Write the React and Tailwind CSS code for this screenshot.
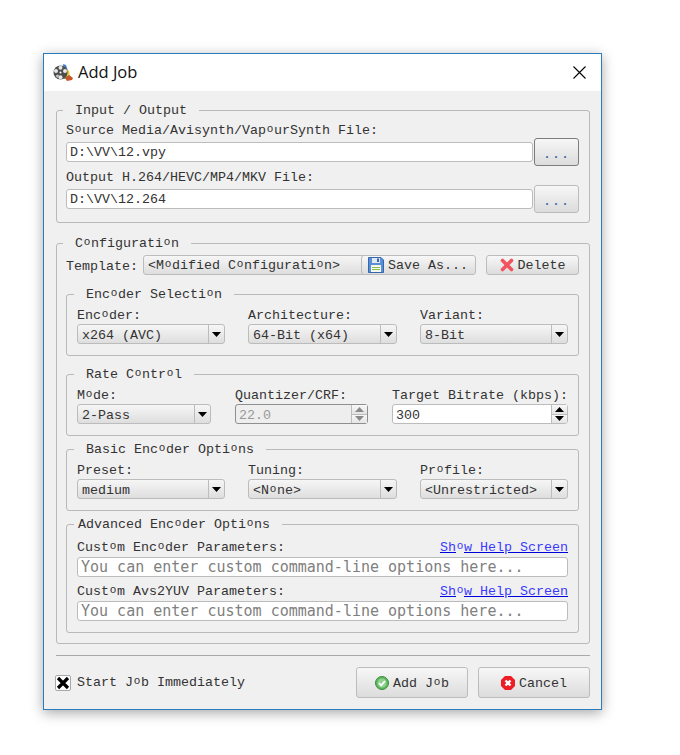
const mono = "font-['Liberation_Mono',monospace] text-[13.33px] text-[#333]";

function T({ children }) {
  const parts = String(children).split("o");
  return (
    <>
      {parts.map((p, i) => (
        <span key={i}>
          {p}
          {i < parts.length - 1 && (
            <span className="inline-block w-[8px] text-center text-[11px] leading-[10px] relative top-[-2px]">o</span>
          )}
        </span>
      ))}
    </>
  );
}

function Group({ title, legendClass, className = "", children }) {
  return (
    <fieldset className={`border border-[#b9b9b9] rounded-[3px] ${className}`}>
      <legend className={`h-[16px] ${legendClass}`}>
        <span className={`block h-[16px] whitespace-pre leading-[18px] ${mono}`}><T>{title}</T></span>
      </legend>
      {children}
    </fieldset>
  );
}

function Label({ children, className = "" }) {
  return <div className={`h-[16px] whitespace-pre leading-[18px] ${mono} ${className}`}><T>{children}</T></div>;
}

function Arrow({ up = false, color = "#000" }) {
  return (
    <svg width="9" height="5" viewBox="0 0 9 5">
      <path d={up ? "M0 5 L4.5 0 L9 5 Z" : "M0 0 L9 0 L4.5 5 Z"} fill={color} />
    </svg>
  );
}

function Combo({ children }) {
  return (
    <div className="h-[20px] flex border border-[#bcbcbc] rounded-[3px] bg-linear-to-b from-[#f6f6f6] to-[#dedede]">
      <div className={`flex-1 h-[18px] pl-[4px] whitespace-pre leading-[22px] ${mono}`}><T>{children}</T></div>
      <div className="w-[16px] border-l border-[#bcbcbc] flex items-center justify-center"><Arrow /></div>
    </div>
  );
}

function Spin({ value, disabled = false }) {
  const c = disabled ? "#8a8a8a" : "#000";
  return (
    <div className={`h-[20px] flex rounded-[3px] border ${disabled ? "border-[#8f8f8f] bg-[#eeeeee]" : "border-[#bcbcbc] bg-white"}`}>
      <div className={`flex-1 h-[18px] pl-[3px] leading-[22px] font-['Liberation_Mono',monospace] text-[13.33px] ${disabled ? "text-[#9a9a9a]" : "text-[#333]"}`}>{value}</div>
      <div className="w-[16px] flex flex-col border-l border-[#bcbcbc]">
        <div className="flex-1 flex items-center justify-center bg-linear-to-b from-[#f8f8f8] to-[#e4e4e4] border-b border-[#bcbcbc]"><Arrow up color={c} /></div>
        <div className="flex-1 flex items-center justify-center bg-linear-to-b from-[#f8f8f8] to-[#e4e4e4]"><Arrow color={c} /></div>
      </div>
    </div>
  );
}

function Field({ value, placeholder, className = "" }) {
  return (
    <input
      readOnly
      value={value}
      placeholder={placeholder}
      className={`h-[20px] block border border-[#bcbcbc] rounded-[3px] bg-white px-[3px] outline-none text-[#333] placeholder:text-[#808080] ${
        placeholder ? "font-['DejaVu_Sans_Mono',monospace] text-[15px]" : "font-['Liberation_Mono',monospace] text-[13.33px]"
      } ${className}`}
    />
  );
}

function Btn({ className = "", children }) {
  return (
    <button className={`flex items-center justify-center border rounded-[3px] bg-linear-to-b from-[#f7f7f7] to-[#dcdcdc] leading-[16px] ${mono} ${className}`}>
      {children}
    </button>
  );
}

function FilmIcon() {
  return (
    <svg width="21" height="20" viewBox="0 0 21 20" className="shrink-0">
      <path d="M11 3 L15 8 L17 15 L11 16 Z" fill="#6aa84f" />
      <path d="M10 1 L13 2 L15 8 L11 9 Z" fill="#3f7fd0" />
      <path d="M14 6 L16 8 L17 14 L14 14 Z" fill="#e6c42a" />
      <circle cx="7.5" cy="9.5" r="7" fill="#4d4d4d" />
      <circle cx="7.5" cy="4.8" r="2" fill="#e8e8e8" />
      <circle cx="7.5" cy="14.2" r="2" fill="#e8e8e8" />
      <circle cx="3" cy="8" r="2" fill="#e8e8e8" />
      <circle cx="12" cy="8" r="2" fill="#e8e8e8" />
      <circle cx="4.5" cy="13" r="1.6" fill="#bdbdbd" />
      <circle cx="7.5" cy="9.5" r="1" fill="#fff" />
      <path d="M12 15 L16 12 L20 15 L19 17 L14 18 Z" fill="#c9562b" />
    </svg>
  );
}

function SaveIcon() {
  return (
    <svg width="16" height="16" viewBox="0 0 16 16" className="shrink-0">
      <path d="M0.5 0.5 H13 L15.5 3 V15.5 H0.5 Z" fill="#5a8fd8" stroke="#3567ad" />
      <rect x="4" y="1" width="8" height="5" fill="#dfe9f6" />
      <rect x="9" y="1.5" width="2" height="3.5" fill="#3567ad" />
      <rect x="3" y="8" width="10" height="7" fill="#f3f7ee" />
      <rect x="4" y="10" width="8" height="1" fill="#8bc34a" />
      <rect x="4" y="12" width="8" height="1" fill="#8bc34a" />
    </svg>
  );
}

function DeleteIcon() {
  return (
    <svg width="14" height="14" viewBox="0 0 14 14" className="shrink-0">
      <path d="M2.5 2.5 L11.5 11.5 M11.5 2.5 L2.5 11.5" stroke="#f0555f" strokeWidth="3.6" strokeLinecap="round" />
    </svg>
  );
}

function OkIcon() {
  return (
    <svg width="14" height="14" viewBox="0 0 14 14" className="shrink-0">
      <circle cx="7" cy="7" r="6.5" fill="#5cb85c" stroke="#3d8b3d" />
      <circle cx="7" cy="7" r="4.5" fill="#8fd18f" />
      <path d="M4 7.2 L6.2 9.4 L10 5" fill="none" stroke="#fff" strokeWidth="1.8" />
    </svg>
  );
}

function CancelIcon() {
  return (
    <svg width="14" height="14" viewBox="0 0 14 14" className="shrink-0">
      <path d="M4 0 H10 L14 4 V10 L10 14 H4 L0 10 V4 Z" fill="#ee1c25" />
      <path d="M4.5 4.5 L9.5 9.5 M9.5 4.5 L4.5 9.5" stroke="#fff" strokeWidth="2.4" />
    </svg>
  );
}

function Link() {
  return (
    <a className="whitespace-pre leading-[18px] h-[16px] font-['Liberation_Mono',monospace] text-[13.33px] text-[#3b3bff] underline decoration-[#0000dd]">
      <T>Show Help Screen</T>
    </a>
  );
}

export default function App() {
  return (
    <div className="w-[680px] h-[755px] bg-white pt-[53px] pl-[43px]">
      <div className="w-[559px] h-[657px] border border-[#2b7cbd] bg-[#f0f0f0] shadow-[0_3px_12px_rgba(0,0,0,0.35)]">
        {/* Title bar */}
        <div className="h-[37px] bg-white flex items-center pl-[9px] pr-[15px]">
          <FilmIcon />
          <span className="ml-[4px] font-['Open_Sans',sans-serif] text-[16.5px] text-[#111]">Add Job</span>
          <svg width="13" height="13" viewBox="0 0 13 13" className="ml-auto">
            <path d="M0.5 0.5 L12.5 12.5 M12.5 0.5 L0.5 12.5" stroke="#000" strokeWidth="1.1" />
          </svg>
        </div>

        <div className="pl-[12px] pr-[11px] pt-[11px]">
          {/* Input / Output */}
          <Group title="Input / Output" legendClass="ml-[-3px] px-[12px]" className="pl-[9px] pr-[10px] pt-[4px] pb-[9px]">
            <Label>Source Media/Avisynth/VapourSynth File:</Label>
            <div className="h-[28px] flex items-center gap-[1px]">
              <Field value="D:\VV\12.vpy" className="w-[467px]" />
              <Btn className="w-[45px] h-[28px] border-[#7c7c7c] !text-[#2a5f9e] tracking-[1px]"><span className="pt-[6px]">...</span></Btn>
            </div>
            <Label className="mt-[3px]">Output H.264/HEVC/MP4/MKV File:</Label>
            <div className="h-[28px] flex items-center gap-[1px]">
              <Field value="D:\VV\12.264" className="w-[467px]" />
              <Btn className="w-[45px] h-[28px] border-[#bcbcbc] !text-[#2a5f9e] tracking-[1px]"><span className="pt-[6px]">...</span></Btn>
            </div>
          </Group>

          {/* Configuration */}
          <Group title="Configuration" legendClass="ml-[-3px] px-[12px]" className="mt-[12px] pl-[9px] pr-[10px] pt-[4px] pb-[10px]">
            <div className="h-[20px] flex items-center">
              <div className={`w-[77px] h-[20px] leading-[24px] ${mono}`}>Template:</div>
              <div className="w-[255px] h-[20px] border border-[#bcbcbc] rounded-[3px] bg-linear-to-b from-[#f6f6f6] to-[#dedede]">
                <div className={`h-[18px] pl-[4px] whitespace-pre leading-[20px] ${mono}`}><T>{"<Modified Configuration>"}</T></div>
              </div>
              <Btn className="relative ml-[-37px] w-[115px] h-[20px] border-[#bcbcbc] gap-[4px] !justify-start pl-[6px]">
                <SaveIcon />
                <span className="pt-[2px]">Save As...</span>
              </Btn>
              <Btn className="ml-auto w-[93px] h-[20px] border-[#bcbcbc] gap-[4px]">
                <DeleteIcon />
                <span className="pt-[2px]">Delete</span>
              </Btn>
            </div>

            <Group title="Encoder Selection" legendClass="ml-[-3px] px-[12px]" className="mt-[11px] px-[10px] pt-[5px] pb-[11px]">
              <div className="grid grid-cols-[148px_149px_148px] gap-x-[23px]">
                <div><Label className="mb-[1px]">Encoder:</Label><Combo>x264 (AVC)</Combo></div>
                <div><Label className="mb-[1px]">Architecture:</Label><Combo>64-Bit (x64)</Combo></div>
                <div><Label className="mb-[1px]">Variant:</Label><Combo>8-Bit</Combo></div>
              </div>
            </Group>

            <Group title="Rate Control" legendClass="ml-[-3px] px-[12px]" className="mt-[10px] px-[10px] pt-[5px] pb-[11px]">
              <div className="grid grid-cols-[134px_133px_176px] gap-x-[24px] w-[491px]">
                <div><Label className="mb-[1px]">Mode:</Label><Combo>2-Pass</Combo></div>
                <div><Label className="mb-[1px]">Quantizer/CRF:</Label><Spin value="22.0" disabled /></div>
                <div><Label className="mb-[1px]">Target Bitrate (kbps):</Label><Spin value="300" /></div>
              </div>
            </Group>

            <Group title="Basic Encoder Options" legendClass="ml-[-3px] px-[12px]" className="mt-[5px] px-[10px] pt-[5px] pb-[11px]">
              <div className="grid grid-cols-[148px_149px_148px] gap-x-[23px]">
                <div><Label className="mb-[1px]">Preset:</Label><Combo>medium</Combo></div>
                <div><Label className="mb-[1px]">Tuning:</Label><Combo>{"<None>"}</Combo></div>
                <div><Label className="mb-[1px]">Profile:</Label><Combo>{"<Unrestricted>"}</Combo></div>
              </div>
            </Group>

            <Group title="Advanced Encoder Options" legendClass="ml-[-3px] pl-[4px] pr-[12px]" className="mt-[5px] px-[10px] pt-[7px] pb-[11px]">
              <div className="flex justify-between">
                <Label>Custom Encoder Parameters:</Label>
                <Link />
              </div>
              <Field value="" placeholder="You can enter custom command-line options here..." className="w-[491px] mt-[2px]" />
              <div className="flex justify-between mt-[6px]">
                <Label>Custom Avs2YUV Parameters:</Label>
                <Link />
              </div>
              <Field value="" placeholder="You can enter custom command-line options here..." className="w-[491px] mt-[2px]" />
            </Group>
          </Group>

          <div className="mt-[11px] h-[1px] bg-[#a9a9a9]" />

          {/* Footer */}
          <div className="mt-[11px] h-[31px] flex items-center">
            <div className="w-[16px] h-[16px] border border-[#a8a8a8] rounded-[2px] bg-white flex items-center justify-center ml-[-1px]">
              <svg width="14" height="14" viewBox="0 0 14 14">
                <path d="M2 2 L12 12 M12 2 L2 12" stroke="#000" strokeWidth="3.2" />
              </svg>
            </div>
            <div className={`ml-[6px] whitespace-pre leading-[16px] ${mono}`}><T>Start Job Immediately</T></div>
            <Btn className="ml-auto w-[112px] h-[31px] border-[#bcbcbc] gap-[4px]">
              <OkIcon />
              <span className="pt-[2px]"><T>Add Job</T></span>
            </Btn>
            <Btn className="ml-[10px] w-[112px] h-[31px] border-[#bcbcbc] gap-[4px]">
              <CancelIcon />
              <span className="pt-[2px]">Cancel</span>
            </Btn>
          </div>
        </div>
      </div>
    </div>
  );
}
